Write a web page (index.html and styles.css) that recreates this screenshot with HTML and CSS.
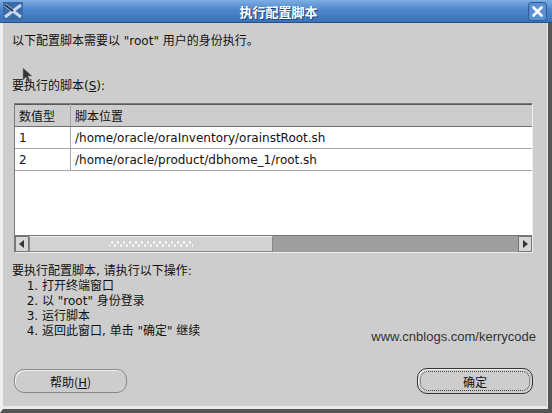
FILE: index.html
```html
<!DOCTYPE html>
<html lang="zh-CN">
  <head>
    <meta charset="UTF-8" />
    <title>执行配置脚本</title>
    <link rel="stylesheet" href="styles.css">
  </head>
  <body>
    <div class="dialog">
      <div class="titlebar">
        <span class="app-icon">
          <svg width="20" height="18" viewBox="0 0 20 18">
            <rect x="0" y="0" width="20" height="18" fill="#3b6aa8" />
            <path d="M2 3 L18 15 M2 15 L18 3" stroke="#c9d8ec" stroke-width="3" />
            <path d="M2 3 L10 9" stroke="#1d2f55" stroke-width="2" />
          </svg>
        </span>
        <span class="title">执行配置脚本</span>
        <span class="close">
          <svg width="19" height="19" viewBox="0 0 19 19">
            <rect x="0.5" y="0.5" width="18" height="18" rx="3" fill="#5b8fd0" stroke="#2d5a96" />
            <path d="M5.5 5.5 L13.5 13.5 M13.5 5.5 L5.5 13.5" stroke="#ffffff" stroke-width="2.6" stroke-linecap="round" />
          </svg>
        </span>
      </div>

      <div class="content">
        <p class="intro">以下配置脚本需要以 "root" 用户的身份执行。</p>
        <p class="label">要执行的脚本(<u>S</u>):</p>

        <div class="scripts">
          <table class="script-table">
            <thead>
              <tr>
                <th class="col-num">数值型</th>
                <th>脚本位置</th>
              </tr>
            </thead>
            <tbody>
              <tr>
                <td class="col-num">1</td>
                <td>/home/oracle/oraInventory/orainstRoot.sh</td>
              </tr>
              <tr>
                <td class="col-num">2</td>
                <td>/home/oracle/product/dbhome_1/root.sh</td>
              </tr>
            </tbody>
          </table>
          <div class="hscroll">
            <span class="arrow">
              <svg width="8" height="10" viewBox="0 0 8 10"><path d="M6 1 L1 5 L6 9 Z" fill="#333" /></svg>
            </span>
            <span class="thumb"><span class="grip"></span></span>
            <span class="track"></span>
            <span class="arrow">
              <svg width="8" height="10" viewBox="0 0 8 10"><path d="M2 1 L7 5 L2 9 Z" fill="#333" /></svg>
            </span>
          </div>
        </div>

        <div class="steps">
          <p>要执行配置脚本, 请执行以下操作:</p>
          <ol>
            <li>打开终端窗口</li>
            <li>以 "root" 身份登录</li>
            <li>运行脚本</li>
            <li>返回此窗口, 单击 "确定" 继续</li>
          </ol>
        </div>

        <p class="credit">www.cnblogs.com/kerrycode</p>

        <div class="buttons">
          <button class="btn">帮助(<u>H</u>)</button>
          <button class="btn btn-default"><span class="focus">确定</span></button>
        </div>
      </div>

      <svg class="cursor" width="12" height="16" viewBox="0 0 12 16">
        <path d="M1 1 L1 13 L4 10 L6 15 L8 14 L6 9 L10 9 Z" fill="#333" stroke="#888" stroke-width="0.6" />
      </svg>
    </div>
  </body>
</html>
```

FILE: styles.css
```css
body {
  margin: 0;
  background: #cdcdcd;
  font-family: "DejaVu Sans", "Noto Sans CJK SC", sans-serif;
  font-size: 12px;
  color: #111;
}

.dialog {
  position: relative;
  width: 552px;
  height: 413px;
  box-sizing: border-box;
  background: #cdcdcd;
  border-left: 3px solid #eeeeee;
  border-right: 4px solid #555;
  border-bottom: 4px solid #555;
  box-shadow: inset 0 -3px 0 #e9e9e9, inset -1px 0 0 #e9e9e9;
}

.titlebar {
  display: flex;
  align-items: center;
  height: 23px;
  margin-left: -3px;
  margin-right: -4px;
  padding: 0 5px 0 3px;
  background: linear-gradient(#7eaee4, #4c86c9 45%, #3b72b8);
  border-bottom: 1px solid #2a4f80;
  box-sizing: border-box;
}

.app-icon {
  display: flex;
  width: 20px;
}

.title {
  flex: 1;
  text-align: center;
  color: #fff;
  font-family: "Noto Sans CJK SC", sans-serif;
  font-weight: bold;
  font-size: 13px;
  text-shadow: 1px 1px 0 #23446f;
  padding-left: 6px;
}

.close {
  display: flex;
}

.content {
  padding: 0 12px 0 9px;
}

.intro {
  margin: 10px 0 0;
  line-height: 16px;
}

.label {
  margin: 29px 0 0;
  line-height: 16px;
}

.label u,
.btn u {
  text-decoration: underline;
}

.scripts {
  margin: 9px 0 0 2px;
  height: 150px;
  border: 1px solid #7a7a7a;
  border-right-color: #eee;
  border-bottom-color: #eee;
  background: #fff;
  display: flex;
  flex-direction: column;
  box-sizing: border-box;
  width: 519px;
}

.script-table {
  width: 100%;
  border-collapse: collapse;
}

.script-table th {
  background: #cdcdcd;
  font-weight: normal;
  text-align: left;
  height: 21px;
  padding: 0 4px;
  border-bottom: 1px solid #6f6f6f;
  border-top: 1px solid #5a5a5a;
}

.script-table td {
  height: 21px;
  padding: 0 4px;
  border-bottom: 1px solid #a8a8a8;
}

.script-table .col-num {
  width: 47px;
  border-right: 1px solid #a8a8a8;
}

.hscroll {
  margin-top: auto;
  display: flex;
  height: 16px;
  background: #9e9e9e;
  border-top: 1px solid #777;
}

.arrow {
  width: 14px;
  display: flex;
  align-items: center;
  justify-content: center;
  background: #d6d6d6;
  border: 1px solid #777;
  box-sizing: border-box;
}

.thumb {
  width: 244px;
  display: flex;
  align-items: center;
  justify-content: center;
  background: #d2d2d2;
  border: 1px solid #888;
  border-top-color: #eee;
  box-sizing: border-box;
}

.grip {
  width: 84px;
  height: 6px;
  background-image: radial-gradient(circle, #ffffff 0.9px, transparent 1.2px),
    radial-gradient(circle, #ffffff 0.9px, transparent 1.2px);
  background-size: 6px 6px;
  background-position: 0 -1.5px, 3px 1.5px;
}

.track {
  flex: 1;
}

.steps {
  margin-top: 11px;
  line-height: 15px;
}

.steps p {
  margin: 0;
}

.steps ol {
  margin: 0;
  padding-left: 30px;
}

.credit {
  margin: -10px 0 0;
  text-align: right;
  font-family: "Liberation Sans", Arial, sans-serif;
  font-size: 13px;
  color: #333;
}

.buttons {
  display: flex;
  justify-content: space-between;
  margin-top: 25px;
  padding-left: 2px;
}

.btn {
  width: 113px;
  height: 24px;
  border: 1px solid #888;
  border-radius: 10px;
  background: #cdcdcd;
  box-shadow: inset 1px 1px 0 #f2f2f2;
  font-family: "Noto Sans CJK SC", sans-serif;
  font-size: 12px;
  color: #111;
  padding: 0;
}

.btn-default {
  width: 116px;
  height: 26px;
  border: 1px solid #333;
  margin-top: -1px;
  margin-right: 3px;
  padding: 2px;
}

.focus {
  display: flex;
  align-items: center;
  justify-content: center;
  height: 100%;
  border: 1px dotted #444;
  border-radius: 8px;
  box-sizing: border-box;
}

.cursor {
  position: absolute;
  left: 19px;
  top: 67px;
}
```
